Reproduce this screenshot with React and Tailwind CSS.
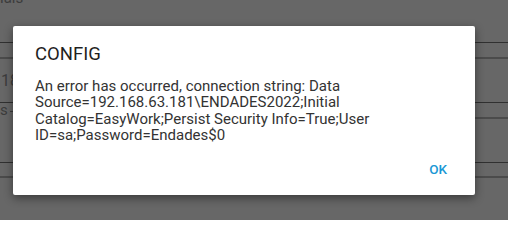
export default function App() {
  const font = { fontFamily: 'Roboto, "Noto Sans", sans-serif' }

  return (
    <div className="relative w-[508px] h-[220px] overflow-hidden bg-[#676767]" style={font}>
      {/* form behind the dimmed overlay */}
      <div className="flex flex-col">
        <div className="h-[42px] overflow-hidden">
          <p className="-mt-[13px] text-[15px] text-[#3c3c3c]">ials</p>
        </div>
        <div className="h-px bg-[#303030]" />
        <div className="h-[14px]" />
        <div className="h-[2px] bg-[#4b4b4b]" />
        <div className="h-[43px] flex items-center pl-[1px]">
          <span className="text-[16px] leading-none text-[#3c3c3c]">181</span>
        </div>
        <div className="h-px bg-[#303030]" />
        <div className="h-[14px] flex items-center">
          <span className="text-[15px] leading-none text-[#3c3c3c] pr-[2px]">s</span>
          <span className="w-[5px] h-px bg-[#3c3c3c] mt-[2px]" />
          <span className="flex-1" />
        </div>
        <div className="h-[2px] ml-[14px] bg-[#4b4b4b]" />
        <div className="h-[43px]" />
        <div className="h-px bg-[#303030]" />
        <div className="h-[13px]" />
        <div className="h-[2px] bg-[#4b4b4b]" />
      </div>

      {/* alert dialog */}
      <div className="absolute left-[13px] top-[26px] w-[462px] h-[169px] bg-white rounded-[2px] shadow-[0_3px_10px_rgba(0,0,0,0.45)] flex flex-col pt-[18px] pl-[22px] pr-[22px]">
        <h2 className="text-[18.5px] leading-[21px] text-[#1f1f1f]">CONFIG</h2>
        <p className="mt-[13px] text-[15px] leading-[16.4px] text-[#333333]">
          An error has occurred, connection string: Data Source=192.168.63.181\ENDADES2022;Initial Catalog=EasyWork;Persist Security Info=True;User ID=sa;Password=Endades$0
        </p>
        <div className="flex justify-end mt-auto pb-[19px] pr-[6px]">
          <button className="text-[13.5px] leading-none font-medium text-[#1a98d5]">OK</button>
        </div>
      </div>
    </div>
  )
}
